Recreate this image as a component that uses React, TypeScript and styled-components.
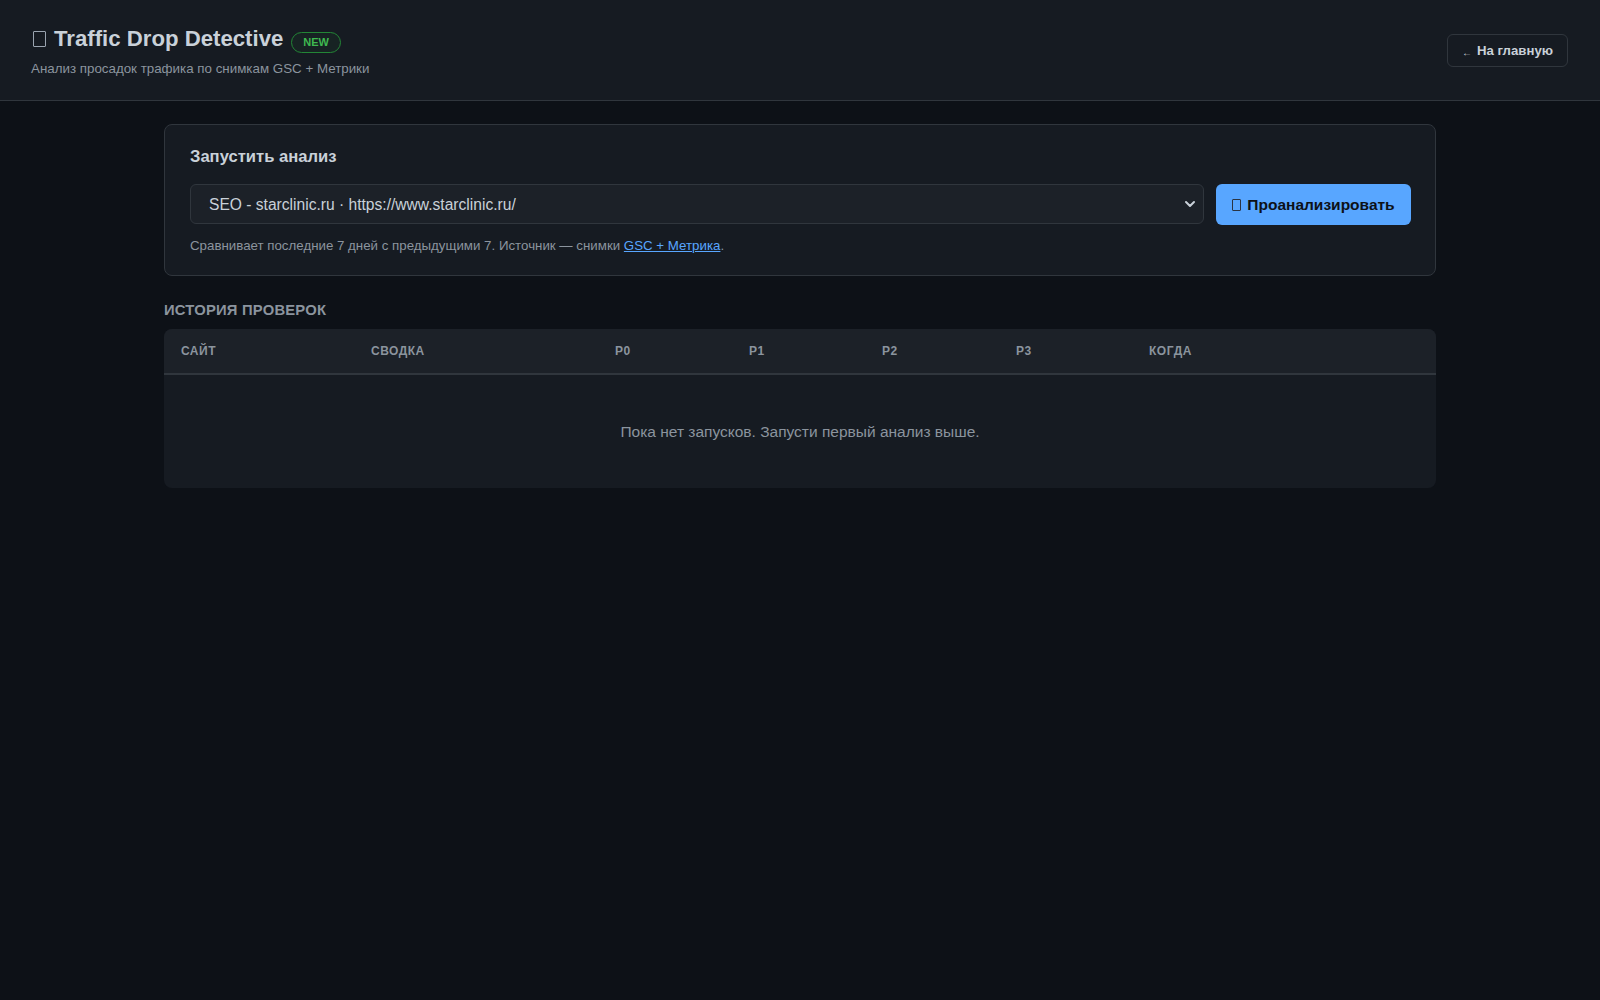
import React from "react";
import styled, { createGlobalStyle } from "styled-components";

const GlobalStyle = createGlobalStyle`
  * {
    box-sizing: border-box;
  }
  html, body {
    margin: 0;
    padding: 0;
    background: #0d1117;
    color: #c9d1d9;
    font-family: "Liberation Sans", Arial, sans-serif;
  }
`;

const Header = styled.header`
  display: flex;
  align-items: center;
  justify-content: space-between;
  height: 101px;
  padding: 1px 32px 0 31px;
  background: #161b22;
  border-bottom: 1px solid #30363d;
`;

const TitleBlock = styled.div`
  display: flex;
  flex-direction: column;
  gap: 8px;
`;

const TitleRow = styled.div`
  display: flex;
  align-items: center;
  gap: 8px;
`;

const Title = styled.h1`
  display: flex;
  align-items: center;
  gap: 8px;
  margin: 0;
  font-size: 22.2px;
  font-weight: 700;
  color: #c9d1d9;
`;

// missing-glyph box, as the emoji shows without an emoji font
const Tofu = styled.span<{ $w: number; $h: number; $color: string }>`
  display: inline-block;
  flex-shrink: 0;
  width: ${(p) => p.$w}px;
  height: ${(p) => p.$h}px;
  border: 1.5px solid ${(p) => p.$color};
  border-radius: 1px;
`;

const TitleTofu = styled(Tofu)`
  margin-left: 2px;
`;

const Badge = styled.span`
  display: inline-flex;
  align-items: center;
  height: 21px;
  padding: 0 11px;
  margin-top: 6px;
  border: 1px solid #238636;
  border-radius: 11px;
  background: rgba(35, 134, 54, 0.08);
  color: #3fb950;
  font-size: 11px;
  font-weight: 700;
`;

const Subtitle = styled.p`
  margin: 0;
  font-size: 13.35px;
  color: #8b949e;
`;

const BackButton = styled.a`
  display: inline-flex;
  align-items: center;
  gap: 5px;
  height: 33px;
  padding: 0 14px;
  border: 1px solid #30363d;
  border-radius: 6px;
  color: #c9d1d9;
  font-size: 13.2px;
  font-weight: 700;
  text-decoration: none;

  small {
    font-size: 10px;
    margin-top: 3px;
  }
`;

const Main = styled.main`
  max-width: 1272px;
  margin: 0 auto;
  padding-top: 23px;
`;

const Card = styled.section`
  background: #161b22;
  border: 1px solid #30363d;
  border-radius: 8px;
  padding: 22px 24px 22px 25px;
`;

const CardTitle = styled.h2`
  margin: 0 0 17px;
  font-size: 16.6px;
  font-weight: 700;
  color: #c9d1d9;
`;

const FormRow = styled.div`
  display: flex;
  gap: 12px;
`;

const SelectWrap = styled.div`
  position: relative;
  flex: 1;
`;

const Select = styled.select`
  width: 100%;
  height: 40px;
  padding: 0 40px 0 18px;
  appearance: none;
  background: #1c2128;
  border: 1px solid #30363d;
  border-radius: 6px;
  color: #c9d1d9;
  font-family: inherit;
  font-size: 15.6px;
  outline: none;
`;

const Chevron = styled.svg`
  position: absolute;
  right: 8px;
  top: 14px;
  pointer-events: none;
`;

const PrimaryButton = styled.button`
  display: inline-flex;
  align-items: center;
  justify-content: center;
  gap: 6px;
  width: 195px;
  height: 41px;
  border: none;
  border-radius: 6px;
  background: #58a6ff;
  color: #0d1117;
  font-family: inherit;
  font-size: 15.5px;
  font-weight: 700;
  cursor: pointer;
`;

const Hint = styled.p`
  margin: 13px 0 0;
  font-size: 13.3px;
  color: #8b949e;

  a {
    color: #58a6ff;
  }
`;

const SectionTitle = styled.h3`
  margin: 26px 0 11px;
  font-size: 14.8px;
  font-weight: 700;
  color: #8b949e;
  text-transform: uppercase;
  letter-spacing: 0.2px;
`;

const TableWrap = styled.div`
  background: #161b22;
  border-radius: 8px;
  overflow: hidden;
`;

const Table = styled.table`
  width: 100%;
  border-collapse: collapse;
  table-layout: fixed;
`;

const Th = styled.th`
  height: 45px;
  padding: 0 17px;
  background: #1c2128;
  border-bottom: 2px solid #30363d;
  color: #8b949e;
  font-size: 12px;
  font-weight: 700;
  letter-spacing: 0.5px;
  text-align: left;
  text-transform: uppercase;
`;

const EmptyCell = styled.td`
  height: 114px;
  padding: 1px 0 0;
  text-align: center;
  color: #8b949e;
  font-size: 15.5px;
`;

const columns = [
  { label: "Сайт", width: 190 },
  { label: "Сводка", width: 244 },
  { label: "P0", width: 134 },
  { label: "P1", width: 133 },
  { label: "P2", width: 134 },
  { label: "P3", width: 133 },
  { label: "Когда", width: 148 },
  { label: "", width: 156 },
];

const App: React.FC = () => {
  return (
    <>
      <GlobalStyle />
      <Header>
        <TitleBlock>
          <TitleRow>
            <Title>
              <TitleTofu $w={13} $h={16} $color="#9aa4b0" />
              Traffic Drop Detective
            </Title>
            <Badge>NEW</Badge>
          </TitleRow>
          <Subtitle>Анализ просадок трафика по снимкам GSC + Метрики</Subtitle>
        </TitleBlock>
        <BackButton href="#">
          <small>←</small> На главную
        </BackButton>
      </Header>
      <Main>
        <Card>
          <CardTitle>Запустить анализ</CardTitle>
          <FormRow>
            <SelectWrap>
              <Select defaultValue="starclinic">
                <option value="starclinic">
                  SEO - starclinic.ru · https://www.starclinic.ru/
                </option>
              </Select>
              <Chevron width="12" height="12" viewBox="0 0 12 12">
                <path
                  d="M2 4l4 4 4-4"
                  fill="none"
                  stroke="#c9d1d9"
                  strokeWidth="2"
                  strokeLinecap="round"
                  strokeLinejoin="round"
                />
              </Chevron>
            </SelectWrap>
            <PrimaryButton>
              <Tofu $w={9} $h={12} $color="#2a3442" />
              Проанализировать
            </PrimaryButton>
          </FormRow>
          <Hint>
            Сравнивает последние 7 дней с предыдущими 7. Источник — снимки{" "}
            <a href="#">GSC + Метрика</a>.
          </Hint>
        </Card>

        <SectionTitle>История проверок</SectionTitle>
        <TableWrap>
          <Table>
            <colgroup>
              {columns.map((c, i) => (
                <col key={i} style={{ width: c.width }} />
              ))}
            </colgroup>
            <thead>
              <tr>
                {columns.map((c, i) => (
                  <Th key={i}>{c.label}</Th>
                ))}
              </tr>
            </thead>
            <tbody>
              <tr>
                <EmptyCell colSpan={8}>
                  Пока нет запусков. Запусти первый анализ выше.
                </EmptyCell>
              </tr>
            </tbody>
          </Table>
        </TableWrap>
      </Main>
    </>
  );
};

export default App;
